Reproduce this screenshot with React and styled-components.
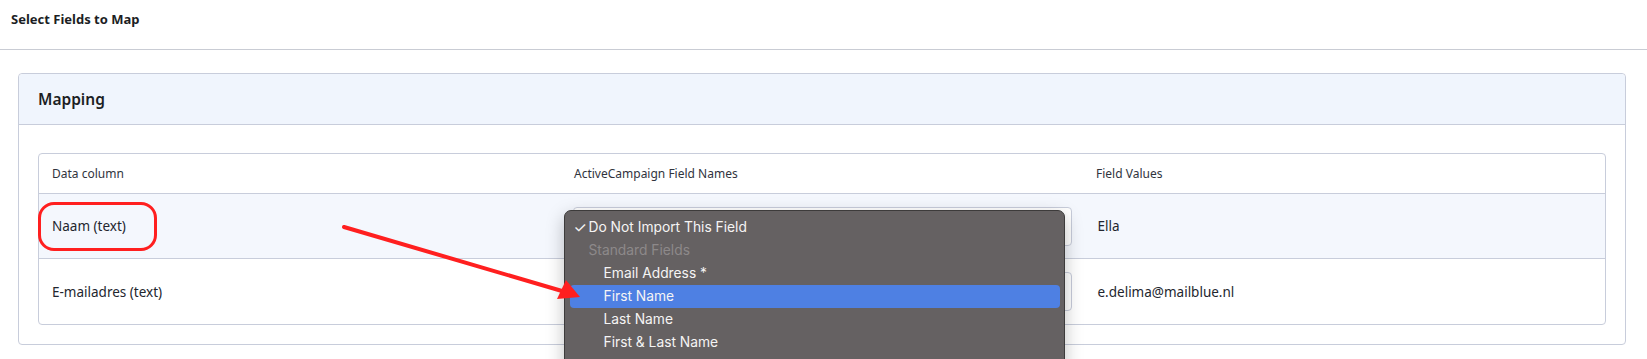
import React from "react";
import styled, { createGlobalStyle } from "styled-components";

const GlobalStyle = createGlobalStyle`
  html, body {
    margin: 0;
    padding: 0;
    overflow: hidden;
    background: #ffffff;
  }
  body {
    font-family: "Noto Sans", "Open Sans", Arial, sans-serif;
    color: #1f2129;
  }
`;

const Page = styled.div`
  position: relative;
  width: 1647px;
  height: 359px;
  overflow: hidden;
`;

const TopBar = styled.div`
  height: 49px;
  display: flex;
  align-items: center;
  padding: 0 11px;
  border-bottom: 1px solid #c9ccd4;
  box-sizing: content-box;
  h1 {
    margin: 0 0 11px;
    font-size: 13px;
    font-weight: 700;
    color: #1c1e24;
  }
`;

const Content = styled.div`
  padding: 23px 21px 0 18px;
`;

const Card = styled.section`
  border: 1px solid #c8cddb;
  border-radius: 4px;
`;

const CardHeader = styled.div`
  height: 50px;
  display: flex;
  align-items: center;
  padding: 0 19px;
  background: #f0f5fd;
  border-bottom: 1px solid #c8cddb;
  border-radius: 4px 4px 0 0;
  h2 {
    margin: 0;
    font-size: 15.5px;
    font-weight: 600;
    color: #1c1e24;
  }
`;

const CardBody = styled.div`
  padding: 28px 19px 19px;
`;

const Table = styled.div`
  border: 1px solid #c8cddb;
  border-radius: 4px;
`;

const Row = styled.div`
  display: grid;
  grid-template-columns: 1fr 1fr 1fr;
  height: ${(p) => p.$h}px;
  background: ${(p) => (p.$active ? "#f4f7fd" : "transparent")};
  border-top: ${(p) => (p.$first ? "none" : "1px solid #c8cddb")};
`;

const Cell = styled.div`
  position: relative;
  display: flex;
  align-items: center;
  padding: 0 13px;
  font-size: ${(p) => (p.$head ? "12px" : "13.5px")};
  color: ${(p) => (p.$head ? "#31343d" : "#23262e")};
`;

const Ring = styled.span`
  position: absolute;
  left: -1px;
  top: 8px;
  width: 113px;
  height: 43px;
  border: 3.5px solid #ff1f1f;
  border-radius: 16px;
  pointer-events: none;
`;

const SelectBox = styled.div`
  position: relative;
  width: 497px;
  height: 37px;
  border: 1px solid #c8cddb;
  border-radius: 4px;
  background: #ffffff;
`;

const Menu = styled.div`
  position: absolute;
  left: -10px;
  top: 2px;
  width: 490px;
  padding: 5px 4px 30px 5px;
  background: #656162;
  border: 1px solid #3d3b3b;
  border-radius: 7px;
  box-shadow: 0 6px 18px rgba(0, 0, 0, 0.25);
  z-index: 5;
  font-family: Inter, "Noto Sans", Arial, sans-serif;
`;

const Item = styled.div`
  height: 23px;
  display: flex;
  align-items: center;
  padding-left: ${(p) => (p.$indent ? 34 : 19)}px;
  border-radius: 4px;
  font-size: 13.8px;
  color: ${(p) => (p.$muted ? "#8d898a" : "#f5f4f4")};
  background: ${(p) => (p.$hover ? "#4e80e3" : "transparent")};
`;

const Check = styled.span`
  width: 15px;
  margin-left: -15px;
  font-size: 15px;
`;

const Overlay = styled.svg`
  position: absolute;
  left: 0;
  top: 0;
  pointer-events: none;
  z-index: 10;
`;

const menuItems = [
  { label: "Do Not Import This Field", checked: true },
  { label: "Standard Fields", muted: true },
  { label: "Email Address *", indent: true },
  { label: "First Name", indent: true, hover: true },
  { label: "Last Name", indent: true },
  { label: "First & Last Name", indent: true },
];

const rows = [
  { column: "Naam (text)", value: "Ella", active: true, open: true },
  { column: "E-mailadres (text)", value: "e.delima@mailblue.nl" },
];

const App = () => {
  return (
    <Page>
      <GlobalStyle />
      <TopBar>
        <h1>Select Fields to Map</h1>
      </TopBar>
      <Content>
        <Card>
          <CardHeader>
            <h2>Mapping</h2>
          </CardHeader>
          <CardBody>
            <Table>
              <Row $h={39} $first>
                <Cell $head>Data column</Cell>
                <Cell $head>ActiveCampaign Field Names</Cell>
                <Cell $head>Field Values</Cell>
              </Row>
              {rows.map((r, i) => (
                <Row key={i} $h={i === 0 ? 64 : 65} $active={r.active}>
                  <Cell>
                    {r.column}
                    {r.active && <Ring />}
                  </Cell>
                  <Cell>
                    <SelectBox>
                      {r.open && (
                        <Menu>
                          {menuItems.map((m) => (
                            <Item
                              key={m.label}
                              $indent={m.indent}
                              $muted={m.muted}
                              $hover={m.hover}
                            >
                              {m.checked && <Check>✓</Check>}
                              {m.label}
                            </Item>
                          ))}
                        </Menu>
                      )}
                    </SelectBox>
                  </Cell>
                  <Cell>{r.value}</Cell>
                </Row>
              ))}
            </Table>
          </CardBody>
        </Card>
      </Content>
      <Overlay width="1647" height="359" viewBox="0 0 1647 359">
        <line x1="344" y1="227" x2="562" y2="291" stroke="#ff1f1f" strokeWidth="4" strokeLinecap="round" />
        <polygon points="580,297 557,299 566,280" fill="#ff1f1f" />
      </Overlay>
    </Page>
  );
};

export default App;
